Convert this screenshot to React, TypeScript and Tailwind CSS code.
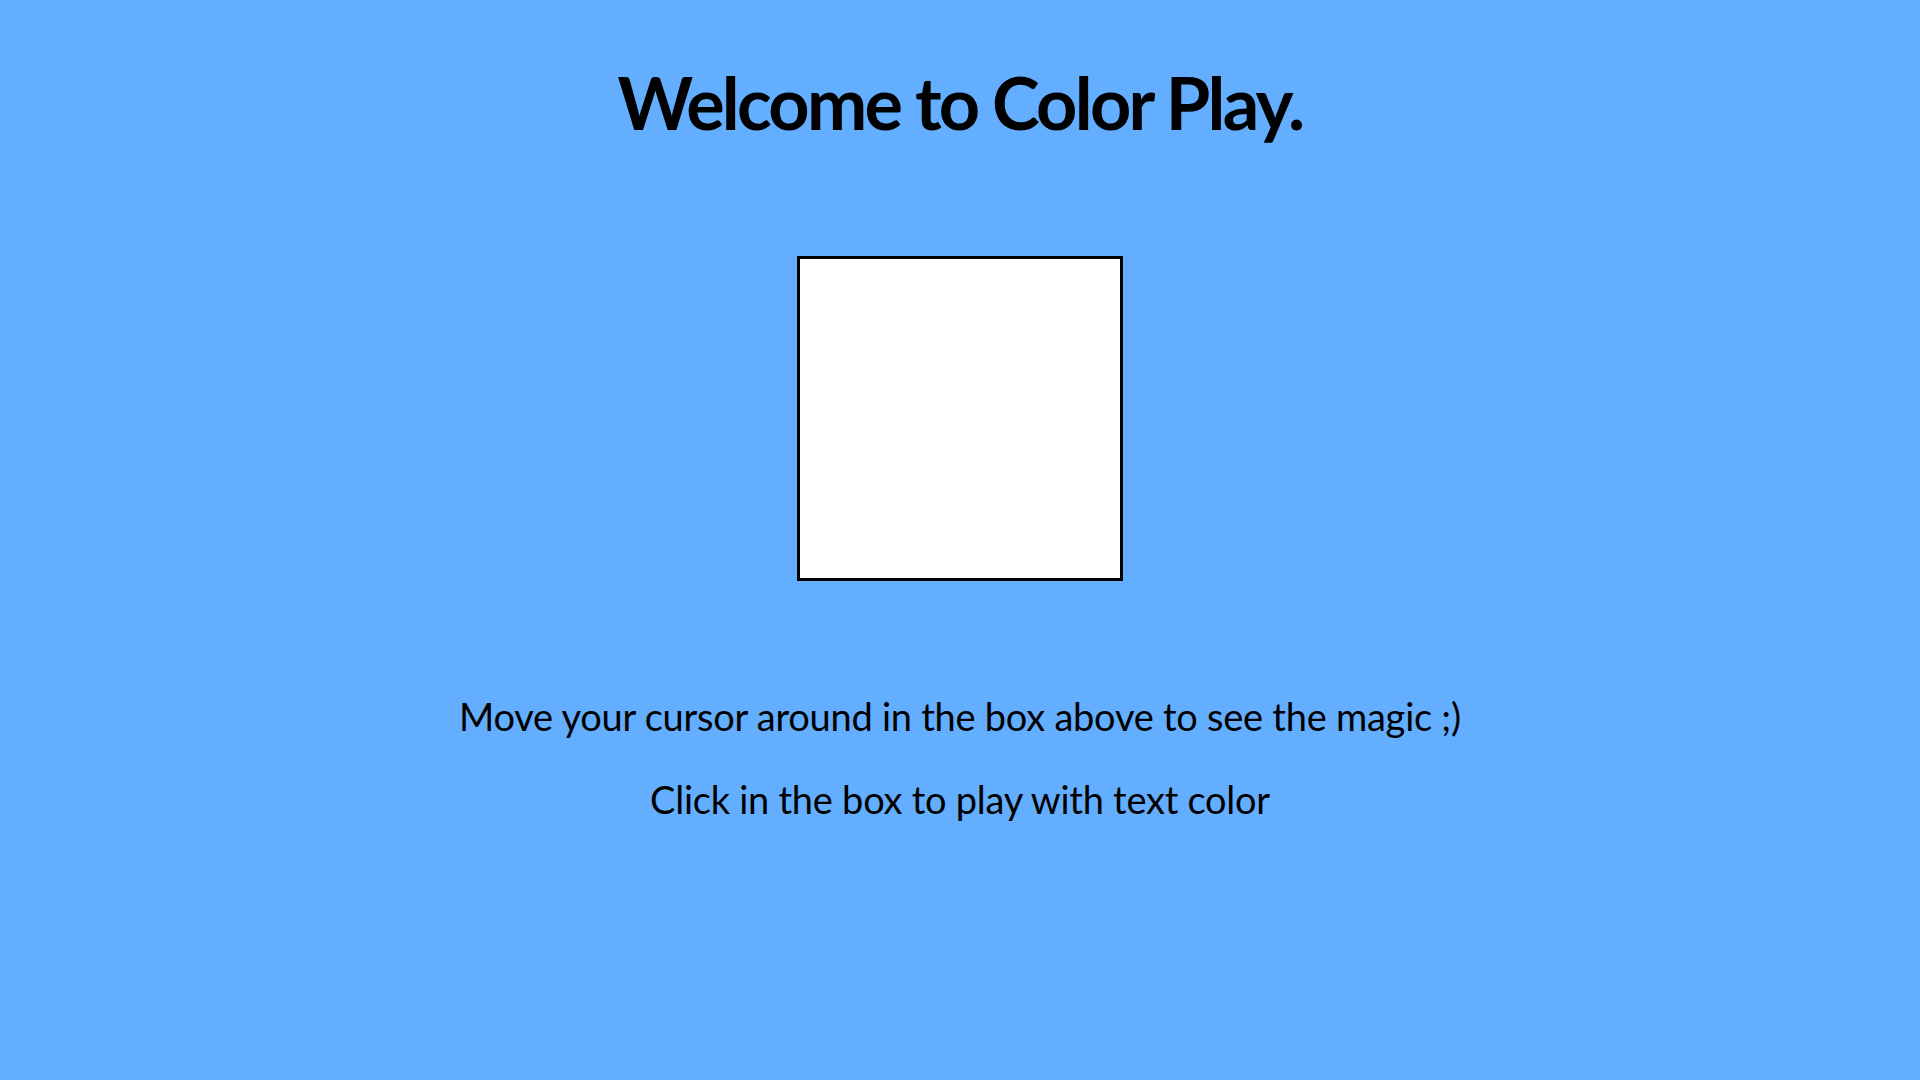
export default function App() {
  return (
    <div className="min-h-screen w-full bg-[#63aeff] flex flex-col items-center text-black" style={{ fontFamily: "Lato, 'Noto Sans', sans-serif" }}>
      <h1 className="mt-[59px] text-[72px] leading-[1.2] font-bold tracking-[-2.75px]">Welcome to Color Play.</h1>
      <div className="mt-[111px] w-[326px] h-[325px] bg-white border-[3px] border-black box-border" />
      <p className="mt-[113px] text-[38px] leading-[1.2] tracking-[-0.25px]">Move your cursor around in the box above to see the magic ;)</p>
      <p className="mt-[37px] text-[38px] leading-[1.2] tracking-[-0.25px]">Click in the box to play with text color</p>
    </div>
  );
}
